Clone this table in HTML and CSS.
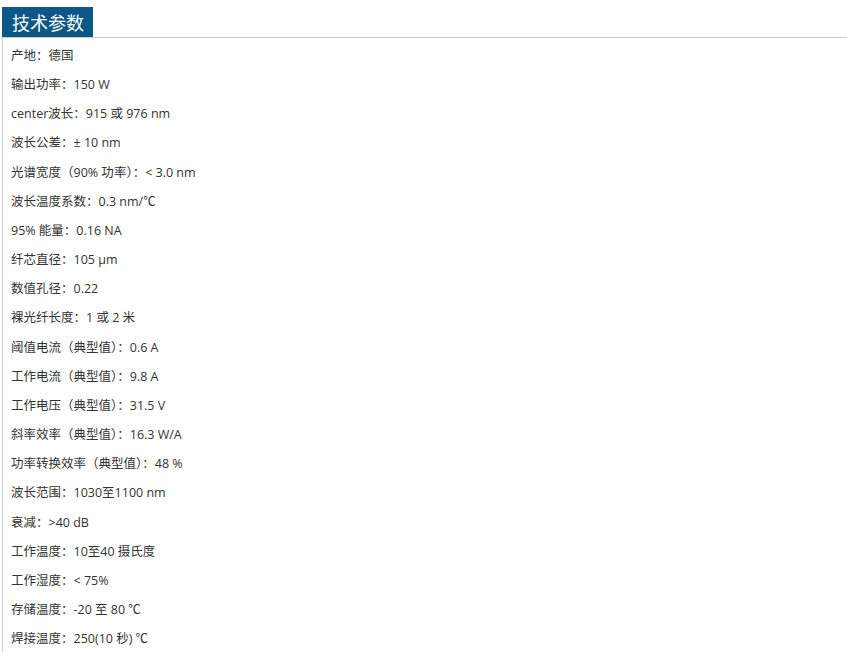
FILE: index.html
```html
<!DOCTYPE html>
<html lang="zh-CN">
<head>
<meta charset="utf-8">
<title>技术参数</title>
<link rel="stylesheet" href="styles.css">
</head>
<body>
<div class="section">
  <div class="head"><h2 class="title">技术参数</h2></div>
  <div class="body">
    <p>产地：德国</p>
    <p>输出功率：150 W</p>
    <p>center波长：915 或 976 nm</p>
    <p>波长公差：± 10 nm</p>
    <p>光谱宽度（90% 功率）：&lt; 3.0 nm</p>
    <p>波长温度系数：0.3 nm/℃</p>
    <p>95% 能量：0.16 NA</p>
    <p>纤芯直径：105 µm</p>
    <p>数值孔径：0.22</p>
    <p>裸光纤长度：1 或 2 米</p>
    <p>阈值电流（典型值）：0.6 A</p>
    <p>工作电流（典型值）：9.8 A</p>
    <p>工作电压（典型值）：31.5 V</p>
    <p>斜率效率（典型值）：16.3 W/A</p>
    <p>功率转换效率（典型值）：48 %</p>
    <p>波长范围：1030至1100 nm</p>
    <p>衰减：&gt;40 dB</p>
    <p>工作温度：10至40 摄氏度</p>
    <p>工作湿度：&lt; 75%</p>
    <p>存储温度：-20 至 80 ℃</p>
    <p>焊接温度：250(10 秒) ℃</p>
  </div>
</div>
</body>
</html>
```
FILE: styles.css
```css
html, body {
  margin: 0;
  padding: 0;
  background: #fff;
}
body {
  padding: 7px 0 0 2px;
  font-family: "Open Sans", "Noto Sans CJK SC", sans-serif;
  color: #333;
}
.head {
  border-bottom: 1px solid #cccccc;
  display: flex;
}
.title {
  box-sizing: border-box;
  margin: 0;
  background: #0b5785;
  color: #fff;
  font-family: "Noto Sans CJK SC", sans-serif;
  font-weight: normal;
  font-size: 18px;
  line-height: 30px;
  height: 30px;
  width: 91px;
  padding: 0 0 0 10px;
  white-space: nowrap;
}
.body {
  border-left: 1px solid #cccccc;
  padding: 3px 0 0 8px;
}
.body p {
  margin: 0;
  font-size: 12.5px;
  line-height: 29.15px;
  white-space: nowrap;
}
```
